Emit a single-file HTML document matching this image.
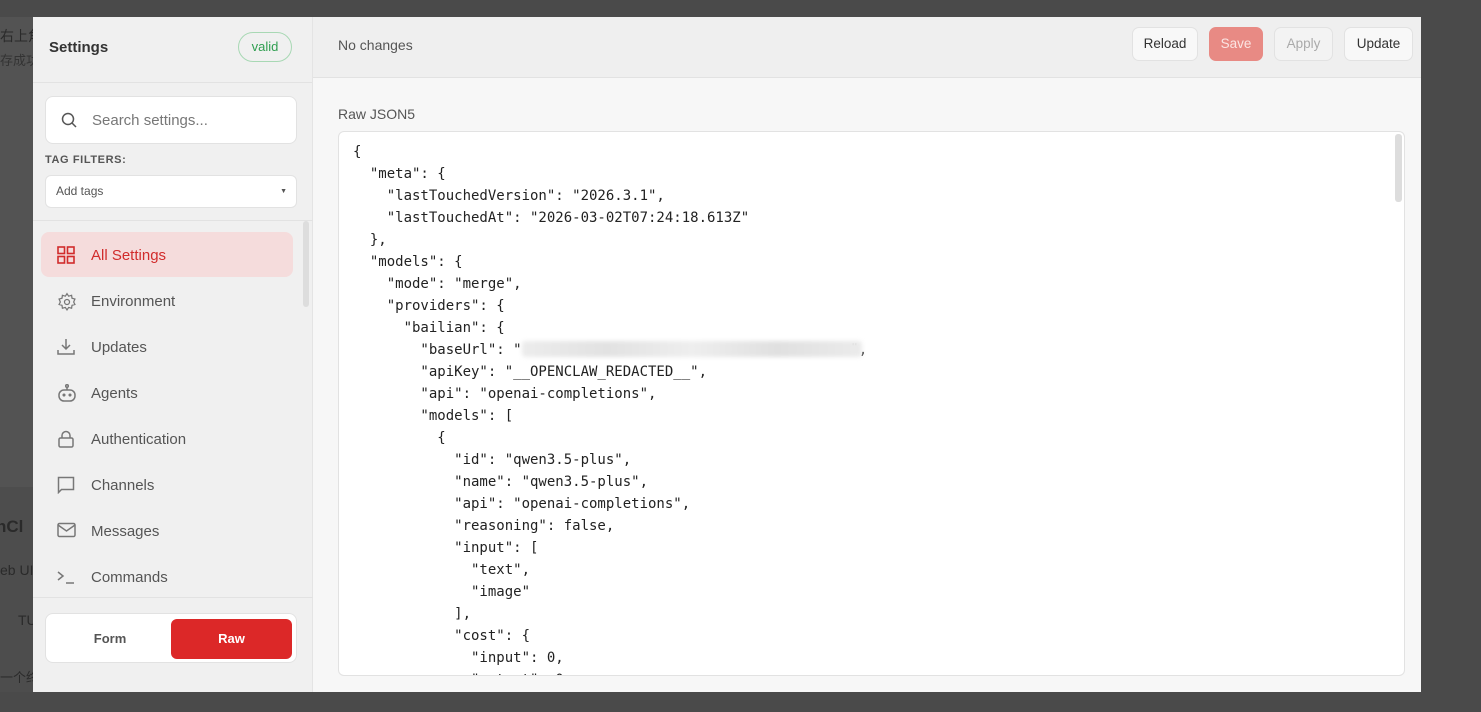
<!DOCTYPE html>
<html><head><meta charset="utf-8"><style>
*{box-sizing:border-box;margin:0;padding:0}
body{width:1481px;height:712px;background:#4a4a4a;font-family:"Liberation Sans","Noto Sans CJK SC",sans-serif;position:relative;overflow:hidden}
.bg{position:absolute;left:0;top:17px;width:40px;height:675px;background:#535353;color:#2a2a2a;font-size:12px}
.bg div{position:absolute;left:0;white-space:nowrap}
.modal{position:absolute;left:33px;top:17px;width:1388px;height:675px;background:#f7f7f7;overflow:hidden}
.side{position:absolute;left:0;top:0;width:280px;height:675px;background:#f0f0f0;border-right:1px solid #e4e4e4}
.shead{height:66px;border-bottom:1px solid #e2e2e2;position:relative}
.shead h1{position:absolute;left:16px;top:22px;font-size:15px;font-weight:bold;color:#333}
.valid{position:absolute;left:205px;top:15px;width:54px;height:30px;border:1px solid #a8d8b4;border-radius:15px;color:#2f9e50;font-size:13px;text-align:center;line-height:28px}
.search{position:absolute;left:12px;top:79px;width:252px;height:48px;background:#fff;border:1px solid #e2e2e2;border-radius:8px;color:#777;font-size:15px;line-height:48px;padding-left:46px}
.search svg{position:absolute;left:15px;top:15px}
.tagl{position:absolute;left:12px;top:137px;font-size:11px;letter-spacing:.6px;color:#555;font-weight:bold}
.tags{position:absolute;left:12px;top:158px;width:252px;height:33px;background:#fff;border:1px solid #e2e2e2;border-radius:6px;font-size:12px;color:#555;line-height:31px;padding-left:10px}
.tags span{position:absolute;right:9px;top:0;font-size:7px}
.navsep{position:absolute;left:0;top:203px;width:280px;border-top:1px solid #e2e2e2}
.nav{position:absolute;left:8px;width:252px;height:45px;font-size:15px;color:#555;line-height:47px;padding-left:50px}
.nav svg{position:absolute;left:16px;top:14px}
.nav.act{background:#f5dcdc;color:#d12c2c;border-radius:8px}
.sb{position:absolute;left:270px;top:204px;width:6px;height:86px;background:#ddd;border-radius:3px}
.foot{position:absolute;left:0;top:580px;width:280px;height:95px;border-top:1px solid #e2e2e2}
.tog{position:absolute;left:12px;top:15px;width:252px;height:50px;background:#fff;border:1px solid #e2e2e2;border-radius:8px}
.tog div{position:absolute;top:5px;height:40px;line-height:40px;text-align:center;font-size:13px;font-weight:bold}
.main{position:absolute;left:280px;top:0;width:1108px;height:675px}
.mhead{height:61px;background:#efefef;border-bottom:1px solid #e2e2e2;position:relative}
.mhead .nc{position:absolute;left:25px;top:20px;font-size:14px;color:#555}
.btn{position:absolute;top:10px;height:34px;border:1px solid #e2e2e2;border-radius:7px;background:#f8f8f8;font-size:13.5px;line-height:32px;text-align:center;color:#333}
.lbl{position:absolute;left:25px;top:89px;font-size:14px;color:#555}
.ta{position:absolute;left:25px;top:114px;width:1067px;height:545px;background:#fff;border:1px solid #e2e2e2;border-radius:6px;overflow:hidden}
pre{position:absolute;left:14px;top:9px;font-family:"DejaVu Sans Mono","Liberation Mono",monospace;font-size:14px;line-height:22px;color:#222}
.blur{position:absolute;left:183px;top:209px;width:340px;height:16px;background:linear-gradient(90deg,#ececec,#e2e2e2,#eeeeee,#e0e0e0,#ebebeb);filter:blur(2px);border-radius:3px}
.vsb{position:absolute;right:2px;top:2px;width:7px;height:68px;background:#ddd;border-radius:3px}
</style></head><body>
<div class="bg">
<div style="top:9px;font-size:14px">右上角</div>
<div style="top:33px;font-size:13px;color:#333">存成功</div>
<div style="top:470px;width:40px;height:205px;background:#4d4d4d"></div>
<div style="top:500px;font-size:17px;font-weight:bold;left:-4px">nCl</div>
<div style="top:545px;font-size:14px">eb UI</div>
<div style="top:595px;font-size:14px;left:18px">TU</div>
<div style="top:650px;font-size:13px">一个终</div>
</div>
<div class="modal">
<div class="side">
<div class="shead"><h1>Settings</h1><div class="valid">valid</div></div>
<div class="search"><svg width="16" height="16" viewBox="0 0 16 16" fill="none" stroke="#555" stroke-width="1.5"><circle cx="7" cy="7" r="5.5"/><path d="M11 11l4 4"/></svg>Search settings...</div>
<div class="tagl">TAG FILTERS:</div>
<div class="tags">Add tags<span>▼</span></div>
<div class="navsep"></div>
<div class="sb"></div>
<div class="nav act" style="top:215px"><svg width="18" height="18" viewBox="0 0 18 18" fill="none" stroke="#d12c2c" stroke-width="1.6"><rect x="1" y="1" width="6.5" height="6.5"/><rect x="10.5" y="1" width="6.5" height="6.5"/><rect x="1" y="10.5" width="6.5" height="6.5"/><rect x="10.5" y="10.5" width="6.5" height="6.5"/></svg>All Settings</div>
<div class="nav" style="top:261px"><svg width="20" height="20" viewBox="0 0 24 24" fill="none" stroke="#777" stroke-width="1.5"><circle cx="12" cy="12" r="3"/><path d="M12 2l2 3 3.5-1 .5 3.5 3.5 1-1.5 3.5 1.5 3-3.5 1-.5 3.5-3.5-1-2 3-2-3-3.5 1-.5-3.5-3.5-1 1.5-3-1.5-3.5 3.5-1 .5-3.5 3.5 1z"/></svg>Environment</div>
<div class="nav" style="top:307px"><svg width="18" height="18" viewBox="0 0 18 18" fill="none" stroke="#777" stroke-width="1.5"><path d="M9 1v10M5 7l4 4 4-4M1 12v4h16v-4"/></svg>Updates</div>
<div class="nav" style="top:353px"><svg width="20" height="18" viewBox="0 0 20 18" fill="none" stroke="#777" stroke-width="1.5"><circle cx="10" cy="2" r="1.3"/><path d="M10 3.5v2"/><rect x="2" y="6" width="16" height="11" rx="5"/><circle cx="7" cy="11" r=".8" fill="#777"/><circle cx="13" cy="11" r=".8" fill="#777"/></svg>Agents</div>
<div class="nav" style="top:399px"><svg width="18" height="18" viewBox="0 0 18 18" fill="none" stroke="#777" stroke-width="1.5"><rect x="2" y="8" width="14" height="9" rx="1.5"/><path d="M5 8V5.5a4 4 0 0 1 8 0V8"/></svg>Authentication</div>
<div class="nav" style="top:445px"><svg width="18" height="18" viewBox="0 0 18 18" fill="none" stroke="#777" stroke-width="1.5"><path d="M1.5 1.5h15v12h-12l-3 3z"/></svg>Channels</div>
<div class="nav" style="top:491px"><svg width="19" height="16" viewBox="0 0 19 16" fill="none" stroke="#777" stroke-width="1.5"><rect x="1" y="1.5" width="17" height="13" rx="1.5"/><path d="M1 3l8.5 6 8.5-6"/></svg>Messages</div>
<div class="nav" style="top:537px"><svg width="18" height="18" viewBox="0 0 18 18" fill="none" stroke="#777" stroke-width="1.5"><path d="M1 4l5 4-5 4M9 15h8"/></svg>Commands</div>
<div class="foot"><div class="tog"><div style="left:5px;width:118px;color:#555">Form</div><div style="left:125px;width:121px;background:#dc2828;color:#fff;border-radius:6px">Raw</div></div></div>
</div>
<div class="main">
<div class="mhead"><div class="nc">No changes</div>
<div class="btn" style="left:819px;width:66px">Reload</div>
<div class="btn" style="left:896px;width:54px;background:#e88a84;border-color:#e88a84;color:#fbe4e2">Save</div>
<div class="btn" style="left:961px;width:59px;color:#aaa;background:#f3f3f3">Apply</div>
<div class="btn" style="left:1031px;width:69px">Update</div>
</div>
<div class="lbl">Raw JSON5</div>
<div class="ta"><div class="vsb"></div>
<pre>{
  "meta": {
    "lastTouchedVersion": "2026.3.1",
    "lastTouchedAt": "2026-03-02T07:24:18.613Z"
  },
  "models": {
    "mode": "merge",
    "providers": {
      "bailian": {
        "baseUrl": "                                       ",
        "apiKey": "__OPENCLAW_REDACTED__",
        "api": "openai-completions",
        "models": [
          {
            "id": "qwen3.5-plus",
            "name": "qwen3.5-plus",
            "api": "openai-completions",
            "reasoning": false,
            "input": [
              "text",
              "image"
            ],
            "cost": {
              "input": 0,
              "output": 0,</pre>
<div class="blur"></div>
</div>
</div>
</div>
</body></html>
